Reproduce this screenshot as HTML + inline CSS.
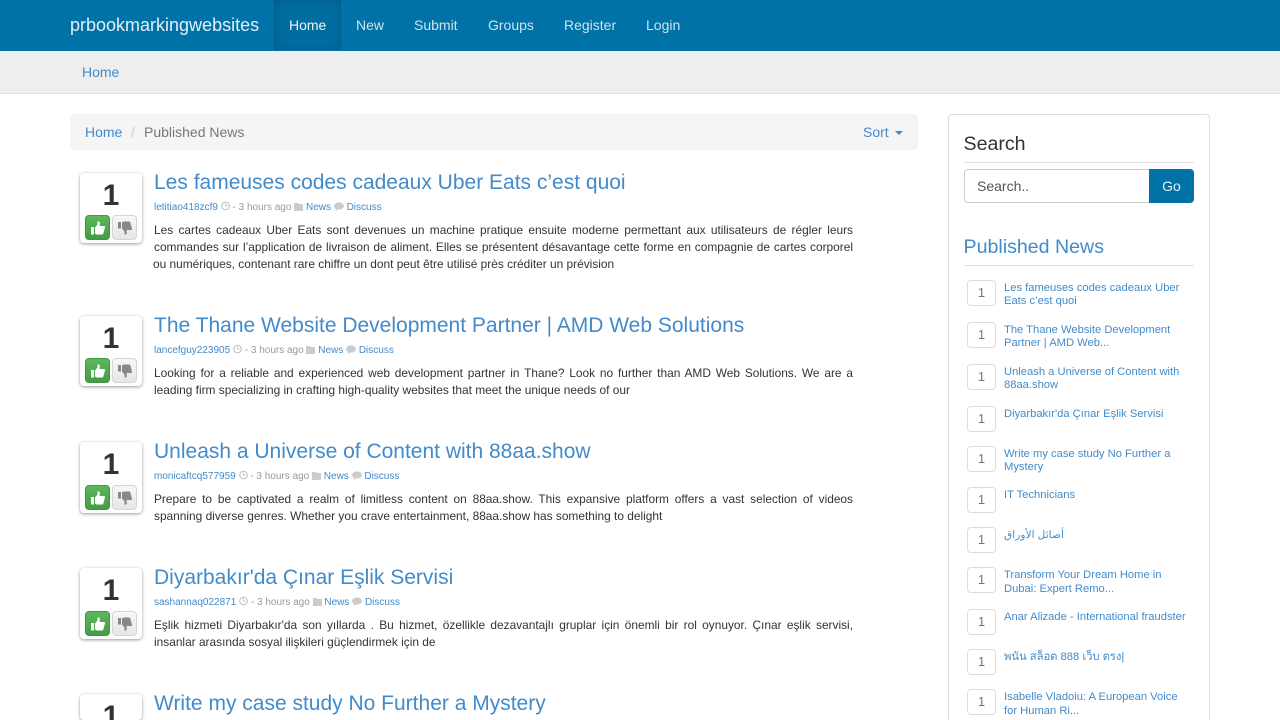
<!DOCTYPE html>
<html><head><meta charset="utf-8"><title>prbookmarkingwebsites</title>
<style>
html,body{margin:0;padding:0;width:1280px;height:720px;overflow:hidden;background:#fff}
body{font-family:"Liberation Sans","Noto Sans CJK SC",sans-serif;font-size:14px;color:#333;position:relative}
a{color:#428bca;text-decoration:none}
.a{position:absolute;white-space:nowrap}
#nav{position:absolute;left:0;top:0;width:1280px;height:51px;background:#0072a8}
#nav .l{position:absolute;top:17px;font-size:14px;line-height:16px;color:#cfe2ed}
#act{position:absolute;left:274px;top:0;width:67px;height:50px;background:#006da1;box-shadow:inset 0 0 9px rgba(0,0,0,.2)}
#sub{position:absolute;left:0;top:51px;width:1280px;height:42px;background:#eee;border-bottom:1px solid #e3e3e3}
#bc{position:absolute;left:70px;top:114px;width:848px;height:36px;background:#f5f5f5;border-radius:4px}
.vote{position:absolute;left:80px;width:62px;height:70px;background:#fff;border-radius:4px;box-shadow:0 1px 3px rgba(0,0,0,.4)}
.vote b{position:absolute;left:0;top:6px;width:62px;text-align:center;font-size:30px;line-height:34px;color:#333}
.up,.dn{position:absolute;top:42px;width:25px;height:25px;box-sizing:border-box;border-radius:4px}
.tall{height:71px}
.tall .up,.tall .dn{top:43px}
.up{left:5px;background:linear-gradient(#5cb85c,#449d44);border:1px solid #419641}
.dn{left:32px;background:linear-gradient(#f7f7f7,#e6e6e6);border:1px solid #d5d5d5}
.up svg,.dn svg{position:absolute;left:5px;top:5px}
.t{position:absolute;left:154px;font-size:21px;line-height:24px;white-space:nowrap}
.m{position:absolute;left:154px;font-size:10px;line-height:14px;color:#999;white-space:nowrap}
.m svg{vertical-align:-1px}
.d{position:absolute;left:154px;width:699px;font-size:11.9px;line-height:17px;color:#333}
.d span{display:block;text-align:justify;text-align-last:justify;white-space:nowrap}
.d span.e{text-align-last:left}
#side{position:absolute;left:948px;top:114px;width:260px;height:606px;border:1px solid #ddd;border-bottom:0;border-radius:4px 4px 0 0;background:#fff}
.hr{position:absolute;left:964px;width:230px;height:1px;background:#e0e0e0}
.n{position:absolute;left:967px;width:29px;height:26px;box-sizing:border-box;border:1px solid #ddd;border-radius:4px;text-align:center;font-size:13px;line-height:24px;color:#777;background:#fff}
.s{position:absolute;left:1004px;width:186px;font-size:11.2px;line-height:13px;color:#428bca}
.s i{font-style:normal;position:relative;top:1px}
</style></head><body>
<div id="nav">
<div id="act"></div>
<div class="a" style="left:70px;top:14px;font-size:18px;line-height:22px;color:#e4eff5">prbookmarkingwebsites</div>
<span class="l" style="left:289px;color:#eef5f9">Home</span>
<span class="l" style="left:356px">New</span>
<span class="l" style="left:414px">Submit</span>
<span class="l" style="left:488px">Groups</span>
<span class="l" style="left:564px">Register</span>
<span class="l" style="left:646px">Login</span>
</div>
<div id="sub"><a class="a" style="left:82px;top:13px;line-height:16px" href="#">Home</a></div>
<div id="bc">
<a class="a" style="left:15px;top:10px;line-height:16px" href="#">Home</a>
<span class="a" style="left:61px;top:10px;line-height:16px;color:#ccc">/</span>
<span class="a" style="left:74px;top:10px;line-height:16px;color:#777">Published News</span>
<a class="a" style="left:793px;top:10px;line-height:16px" href="#">Sort</a>
<span class="a" style="left:825px;top:17px;width:0;height:0;border-left:4px solid transparent;border-right:4px solid transparent;border-top:4px solid #428bca"></span>
</div>

<div class="vote" style="top:173px"><b>1</b><div class="up"><svg width="14" height="14" viewBox="0 0 14 14"><path fill="#fff" d="M0 6h3v7.500H0zM4 6.500l2.500-3V.5c1.700-.5 2.700.8 2.300 2.300L8.500 5H13c1 0 1.200 1 .9 1.700l-1.600 5.800c-.2.700-.7 1-1.400 1H5.500L4 12.500z"/></svg></div><div class="dn"><svg width="14" height="14" viewBox="0 0 14 14"><path fill="#888" d="M0 1h3v6.500H0zM4 7.500l2.500 3v3c1.700.5 2.700-.8 2.300-2.300L8.500 9H13c1 0 1.200-1 .9-1.700L12.300 1.500C12.100.8 11.600.5 10.900.5H5.500L4 1.500z"/></svg></div></div>
<a class="t" style="top:171px" href="#">Les fameuses codes cadeaux Uber Eats c’est quoi</a>
<div class="m" style="top:201px"><a href="#">letitiao418zcf9</a> <svg width="9" height="10" viewBox="0 0 9 10"><circle cx="4.500" cy="5" r="3.800" fill="none" stroke="#bbb"/><path d="M4.500 2.500V5h2" fill="none" stroke="#bbb" stroke-width=".8"/></svg> - 3 hours ago <svg width="9" height="9" viewBox="0 0 9 9"><path fill="#ccc" d="M0 1h4l1 1h4v7H0z"/></svg> <a href="#">News</a> <svg width="10" height="9" viewBox="0 0 10 9"><ellipse cx="5" cy="4" rx="5" ry="3.600" fill="#ccc"/><path fill="#ccc" d="M2 6L1.500 9 5 7z"/></svg> <a href="#">Discuss</a></div>
<div class="d" style="top:222px"><span>Les cartes cadeaux Uber Eats sont devenues un machine pratique ensuite moderne permettant aux utilisateurs de régler leurs</span><span>commandes sur l’application de livraison de aliment. Elles se présentent désavantage cette forme en compagnie de cartes corporel</span><span class="e" style="margin-left:-1px">ou numériques, contenant rare chiffre un dont peut être utilisé près créditer un prévision</span></div>

<div class="vote" style="top:316px"><b>1</b><div class="up"><svg width="14" height="14" viewBox="0 0 14 14"><path fill="#fff" d="M0 6h3v7.500H0zM4 6.500l2.500-3V.5c1.700-.5 2.700.8 2.300 2.300L8.500 5H13c1 0 1.200 1 .9 1.700l-1.600 5.800c-.2.700-.7 1-1.400 1H5.500L4 12.500z"/></svg></div><div class="dn"><svg width="14" height="14" viewBox="0 0 14 14"><path fill="#888" d="M0 1h3v6.500H0zM4 7.500l2.500 3v3c1.700.5 2.700-.8 2.300-2.300L8.500 9H13c1 0 1.200-1 .9-1.700L12.300 1.500C12.100.8 11.600.5 10.900.5H5.500L4 1.500z"/></svg></div></div>
<a class="t" style="top:314px" href="#">The Thane Website Development Partner | AMD Web Solutions</a>
<div class="m" style="top:344px"><a href="#">lancefguy223905</a> <svg width="9" height="10" viewBox="0 0 9 10"><circle cx="4.500" cy="5" r="3.800" fill="none" stroke="#bbb"/><path d="M4.500 2.500V5h2" fill="none" stroke="#bbb" stroke-width=".8"/></svg> - 3 hours ago <svg width="9" height="9" viewBox="0 0 9 9"><path fill="#ccc" d="M0 1h4l1 1h4v7H0z"/></svg> <a href="#">News</a> <svg width="10" height="9" viewBox="0 0 10 9"><ellipse cx="5" cy="4" rx="5" ry="3.600" fill="#ccc"/><path fill="#ccc" d="M2 6L1.500 9 5 7z"/></svg> <a href="#">Discuss</a></div>
<div class="d" style="top:365px"><span>Looking for a reliable and experienced web development partner in Thane? Look no further than AMD Web Solutions. We are a</span><span class="e">leading firm specializing in crafting high-quality websites that meet the unique needs of our</span></div>

<div class="vote tall" style="top:442px"><b>1</b><div class="up"><svg width="14" height="14" viewBox="0 0 14 14"><path fill="#fff" d="M0 6h3v7.500H0zM4 6.500l2.500-3V.5c1.700-.5 2.700.8 2.300 2.300L8.500 5H13c1 0 1.200 1 .9 1.700l-1.600 5.800c-.2.700-.7 1-1.400 1H5.500L4 12.500z"/></svg></div><div class="dn"><svg width="14" height="14" viewBox="0 0 14 14"><path fill="#888" d="M0 1h3v6.500H0zM4 7.500l2.500 3v3c1.700.5 2.700-.8 2.300-2.300L8.500 9H13c1 0 1.200-1 .9-1.700L12.300 1.500C12.100.8 11.600.5 10.900.5H5.500L4 1.500z"/></svg></div></div>
<a class="t" style="top:440px" href="#">Unleash a Universe of Content with 88aa.show</a>
<div class="m" style="top:470px"><a href="#">monicaftcq577959</a> <svg width="9" height="10" viewBox="0 0 9 10"><circle cx="4.500" cy="5" r="3.800" fill="none" stroke="#bbb"/><path d="M4.500 2.500V5h2" fill="none" stroke="#bbb" stroke-width=".8"/></svg> - 3 hours ago <svg width="9" height="9" viewBox="0 0 9 9"><path fill="#ccc" d="M0 1h4l1 1h4v7H0z"/></svg> <a href="#">News</a> <svg width="10" height="9" viewBox="0 0 10 9"><ellipse cx="5" cy="4" rx="5" ry="3.600" fill="#ccc"/><path fill="#ccc" d="M2 6L1.500 9 5 7z"/></svg> <a href="#">Discuss</a></div>
<div class="d" style="top:491px"><span>Prepare to be captivated a realm of limitless content on 88aa.show. This expansive platform offers a vast selection of videos</span><span class="e">spanning diverse genres. Whether you crave entertainment, 88aa.show has something to delight</span></div>

<div class="vote tall" style="top:568px"><b>1</b><div class="up"><svg width="14" height="14" viewBox="0 0 14 14"><path fill="#fff" d="M0 6h3v7.500H0zM4 6.500l2.500-3V.5c1.700-.5 2.700.8 2.300 2.300L8.500 5H13c1 0 1.200 1 .9 1.700l-1.600 5.800c-.2.700-.7 1-1.400 1H5.500L4 12.500z"/></svg></div><div class="dn"><svg width="14" height="14" viewBox="0 0 14 14"><path fill="#888" d="M0 1h3v6.500H0zM4 7.500l2.500 3v3c1.700.5 2.700-.8 2.300-2.300L8.500 9H13c1 0 1.200-1 .9-1.700L12.300 1.500C12.100.8 11.600.5 10.900.5H5.500L4 1.500z"/></svg></div></div>
<a class="t" style="top:566px" href="#">Diyarbakır'da Çınar Eşlik Servisi</a>
<div class="m" style="top:596px"><a href="#">sashannaq022871</a> <svg width="9" height="10" viewBox="0 0 9 10"><circle cx="4.500" cy="5" r="3.800" fill="none" stroke="#bbb"/><path d="M4.500 2.500V5h2" fill="none" stroke="#bbb" stroke-width=".8"/></svg> - 3 hours ago <svg width="9" height="9" viewBox="0 0 9 9"><path fill="#ccc" d="M0 1h4l1 1h4v7H0z"/></svg> <a href="#">News</a> <svg width="10" height="9" viewBox="0 0 10 9"><ellipse cx="5" cy="4" rx="5" ry="3.600" fill="#ccc"/><path fill="#ccc" d="M2 6L1.500 9 5 7z"/></svg> <a href="#">Discuss</a></div>
<div class="d" style="top:617px"><span>Eşlik hizmeti Diyarbakır'da son yıllarda . Bu hizmet, özellikle dezavantajlı gruplar için önemli bir rol oynuyor. Çınar eşlik servisi,</span><span class="e">insanlar arasında sosyal ilişkileri güçlendirmek için de</span></div>

<div class="vote" style="top:694px;height:26px"><b>1</b></div>
<a class="t" style="top:692px" href="#">Write my case study No Further a Mystery</a>

<div id="side"></div>
<div class="a" style="left:963.5px;top:132px;font-size:19.6px;line-height:24px;color:#333">Search</div>
<div class="hr" style="top:162px"></div>
<div class="a" style="left:964px;top:169px;width:186px;height:34px;box-sizing:border-box;border:1px solid #ccc;border-radius:4px 0 0 4px;background:#fff;padding-left:12px;line-height:32px;color:#555">Search..</div>
<div class="a" style="left:1149px;top:169px;width:45px;height:34px;background:#0072a8;border-radius:0 4px 4px 0;color:#e8f2f7;text-align:center;line-height:34px">Go</div>
<a class="a" style="left:963.5px;top:235px;font-size:19.6px;line-height:24px" href="#">Published News</a>
<div class="hr" style="top:265px"></div>

<div class="n" style="top:280px">1</div><a class="s" style="top:282px" href="#">Les fameuses codes cadeaux Uber Eats c’est quoi</a>
<div class="n" style="top:322px">1</div><a class="s" style="top:324px" href="#">The Thane Website Development Partner | AMD Web...</a>
<div class="n" style="top:364px">1</div><a class="s" style="top:366px" href="#">Unleash a Universe of Content with 88aa.show</a>
<div class="n" style="top:406px">1</div><a class="s" style="top:408px" href="#">Diyarbakır'da Çınar Eşlik Servisi</a>
<div class="n" style="top:446px">1</div><a class="s" style="top:448px" href="#">Write my case study No Further a Mystery</a>
<div class="n" style="top:487px">1</div><a class="s" style="top:489px" href="#">IT Technicians</a>
<div class="n" style="top:527px">1</div><a class="s" style="top:529px;font-size:10.7px" href="#">أصائل الأوراق</a>
<div class="n" style="top:567px">1</div><a class="s" style="top:569px" href="#">Transform Your Dream Home in <i>Dubai: Expert Remo...</i></a>
<div class="n" style="top:609px">1</div><a class="s" style="top:611px" href="#">Anar Alizade - International fraudster</a>
<div class="n" style="top:649px">1</div><a class="s" style="top:651px" href="#">พนัน สล็อต 888 เว็บ ตรง|</a>
<div class="n" style="top:689px">1</div><a class="s" style="top:691px" href="#">Isabelle Vladoiu: A European Voice <i>for Human Ri...</i></a>
</body></html>
